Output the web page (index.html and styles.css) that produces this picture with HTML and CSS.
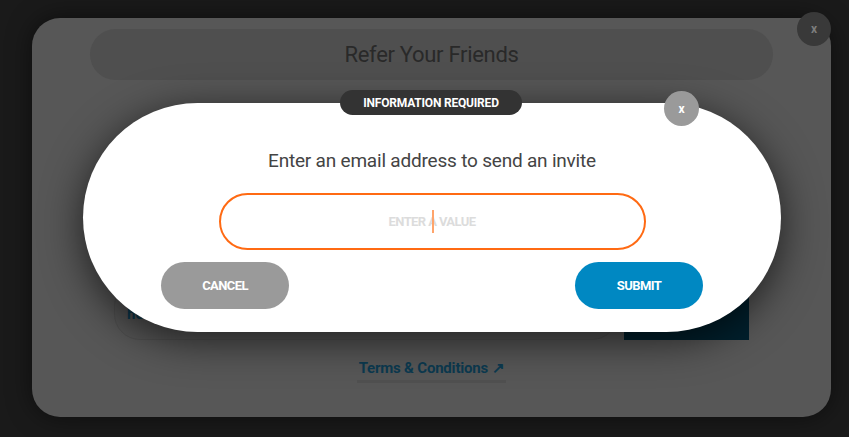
FILE: index.html
```html
<!DOCTYPE html>
<html lang="en">
<head>
  <meta charset="UTF-8">
  <meta name="viewport" content="width=device-width, initial-scale=1.0">
  <link rel="stylesheet" href="styles.css">
</head>
<body>

<div class="panel">
  <button class="panel-close">x</button>

  <div class="title-bar">Refer Your Friends</div>

  <div class="invite-row">
    <div class="invite-field">hello@</div>
    <div class="invite-send"></div>
  </div>

  <div class="terms">
    <a href="#">Terms &amp; Conditions &#8599;</a>
  </div>

  <div class="dialog">
    <div class="dialog-badge">INFORMATION REQUIRED</div>
    <button class="dialog-close">x</button>

    <p class="dialog-text">Enter an email address to send an invite</p>

    <div class="dialog-input">
      <span class="caret"></span>
      <span class="placeholder">ENTER A VALUE</span>
    </div>

    <div class="dialog-actions">
      <button class="btn btn-cancel">CANCEL</button>
      <button class="btn btn-submit">SUBMIT</button>
    </div>
  </div>
</div>

</body>
</html>
```

FILE: styles.css
```css
body {
  font-family: Roboto, "Liberation Sans", Arial, sans-serif;
  margin: 0;
  height: 437px;
  padding: 18px 18px 0 32px;
  box-sizing: border-box;
  background-color: #1a1a1a;
  overflow: hidden;
}

.panel {
  position: relative;
  width: 799px;
  height: 399px;
  background-color: #575757;
  border-radius: 28px;
  box-shadow: 0 0 24px rgba(0, 0, 0, 0.5);
  display: flex;
  flex-direction: column;
  align-items: center;
}

.panel-close {
  position: absolute;
  left: 765px;
  top: -6px;
  width: 34px;
  height: 34px;
  border-radius: 50%;
  border: none;
  background-color: #393939;
  color: #7d7d7d;
  font-family: Roboto, sans-serif;
  font-weight: 700;
  font-size: 12px;
  padding: 0;
}

.title-bar {
  margin-top: 11px;
  width: 683px;
  height: 51px;
  border-radius: 26px;
  background-color: #4f4f4f;
  display: flex;
  align-items: center;
  justify-content: center;
  font-size: 22px;
  letter-spacing: -0.3px;
  color: #292929;
}

.invite-row {
  margin-top: 200px;
  width: 635px;
  height: 60px;
  display: flex;
  gap: 6px;
}

.invite-field {
  flex: 1;
  border-radius: 26px;
  border: 1px solid #4f4f4f;
  background-color: #555;
  color: #0c3a50;
  font-weight: 700;
  font-size: 15px;
  padding: 24px 0 0 12px;
  box-sizing: border-box;
}

.invite-send {
  width: 125px;
  background-color: #00202d;
}

.terms {
  margin-top: 18px;
}

.terms a {
  display: inline-block;
  color: #0c3a50;
  font-weight: 700;
  font-size: 15px;
  letter-spacing: -0.2px;
  text-decoration: none;
  padding: 0 2px 3px;
  border-bottom: 3px solid #505050;
}

.dialog {
  position: absolute;
  left: 51px;
  top: 85px;
  width: 698px;
  height: 229px;
  background-color: #fff;
  border-radius: 115px;
  box-shadow: 0 8px 40px rgba(0, 0, 0, 0.65);
  display: flex;
  flex-direction: column;
  align-items: center;
}

.dialog-badge {
  position: absolute;
  top: -13px;
  left: 257px;
  width: 182px;
  height: 25px;
  border-radius: 13px;
  background-color: #333;
  color: #fff;
  font-weight: 700;
  font-size: 12px;
  letter-spacing: -0.2px;
  display: flex;
  align-items: center;
  justify-content: center;
}

.dialog-close {
  position: absolute;
  left: 581px;
  top: -12px;
  width: 35px;
  height: 35px;
  border-radius: 50%;
  border: none;
  background-color: #9a9a9a;
  color: #fff;
  font-family: Roboto, sans-serif;
  font-weight: 700;
  font-size: 12px;
  padding: 0;
}

.dialog-text {
  margin: 46px 0 0;
  line-height: 24px;
  font-size: 19px;
  letter-spacing: -0.2px;
  color: #444;
}

.dialog-input {
  position: relative;
  margin-top: 20px;
  width: 427px;
  height: 57px;
  box-sizing: border-box;
  border: 2px solid #ff6a13;
  border-radius: 29px;
  display: flex;
  align-items: center;
  justify-content: center;
}

.placeholder {
  color: #dcdcdc;
  font-weight: 700;
  font-size: 13px;
  letter-spacing: -0.6px;
}

.caret {
  position: absolute;
  left: 211px;
  top: 15px;
  width: 2px;
  height: 23px;
  background-color: #ffa46b;
}

.dialog-actions {
  margin-top: 12px;
  width: 100%;
  box-sizing: border-box;
  padding: 0 78px;
  display: flex;
  justify-content: space-between;
}

.btn {
  width: 128px;
  height: 47px;
  border: none;
  border-radius: 24px;
  color: #fff;
  font-family: Roboto, sans-serif;
  font-weight: 700;
  font-size: 13px;
  letter-spacing: -0.6px;
  cursor: pointer;
}

.btn-cancel {
  background-color: #9a9a9a;
}

.btn-submit {
  background-color: #0088c2;
}
```
